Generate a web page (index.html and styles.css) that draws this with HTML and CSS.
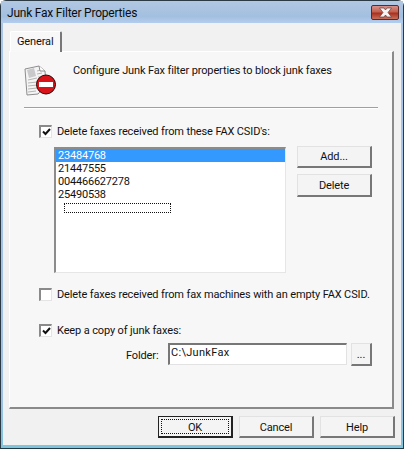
FILE: index.html
```html
<!DOCTYPE html>
<html lang="en">
<head>
<meta charset="utf-8">
<title>Junk Fax Filter Properties</title>
<link rel="stylesheet" href="styles.css">
</head>
<body>
<div class="window">
  <div class="titlebar">
    <span class="title">Junk Fax Filter Properties</span>
    <div class="close">
      <svg width="17" height="11" viewBox="0 0 17 11"><path d="M2.500 1h4.500l1.500 2L10 1h4.500l-3.500 4.500 3.500 4.500H10L8.500 8 7 10H2.500L6 5.500z" fill="#f4f4f4" stroke="#6b3a34" stroke-width=".7"/></svg>
    </div>
  </div>
  <div class="client">
    <div class="tabstrip"><div class="tab">General</div></div>
    <div class="panel">
      <div class="intro">
        <svg class="intro-icon" width="34" height="34" viewBox="0 0 34 34">
          <path d="M1 5l14-3 6 5 1 14-8 9-11 1z" fill="#f4f4f4" stroke="#8d8d8d"/>
          <path d="M3 6l7-2 2 8-7 2z" fill="#c9c9cc"/>
          <path d="M4 16l9-2M4 19l9-1M4 22l9-1M4 25l9-1M4 28l8-1M13 7l4-1M13 10l5-1M14 13l4 0" stroke="#b5b5b5" fill="none"/>
          <path d="M15 2l1 5 5 0" fill="#fff" stroke="#8d8d8d"/>
          <circle cx="22" cy="20.500" r="9.500" fill="#d8141a" stroke="#2a0505"/>
          <rect x="15" y="18" width="14" height="5" fill="#fff"/>
        </svg>
        <span class="intro-text">Configure Junk Fax filter properties to block junk faxes</span>
      </div>
      <div class="rule"></div>
      <label class="check check-first"><span class="box"><svg width="9" height="8" viewBox="0 0 9 8"><path d="M1 3.500l2.500 2.500L8 1" fill="none" stroke="#111" stroke-width="2"/></svg></span>Delete faxes received from these FAX CSID's:</label>
      <div class="list-area">
        <div class="list">
          <div class="row row-selected">23484768</div>
          <div class="row">21447555</div>
          <div class="row">004466627278</div>
          <div class="row">25490538</div>
          <div class="editing"></div>
        </div>
        <div class="list-actions">
          <div class="btn btn-side">Add...</div>
          <div class="btn btn-side">Delete</div>
        </div>
      </div>
      <label class="check check-second"><span class="box"></span>Delete faxes received from fax machines with an empty FAX CSID.</label>
      <label class="check check-third"><span class="box"><svg width="9" height="8" viewBox="0 0 9 8"><path d="M1 3.500l2.500 2.500L8 1" fill="none" stroke="#111" stroke-width="2"/></svg></span>Keep a copy of junk faxes:</label>
      <div class="folder">
        <span class="folder-label">Folder:</span>
        <div class="input">C:\JunkFax</div>
        <div class="btn btn-browse">...</div>
      </div>
    </div>
    <div class="footer">
      <div class="btn btn-foot btn-default"><span class="focus">OK</span></div>
      <div class="btn btn-foot">Cancel</div>
      <div class="btn btn-foot">Help</div>
    </div>
  </div>
</div>
</body>
</html>
```

FILE: styles.css
```css
* { box-sizing: border-box; }
html, body { margin: 0; padding: 0; }
body {
  width: 404px;
  height: 449px;
  overflow: hidden;
  font-family: Roboto, "Liberation Sans", sans-serif;
  font-size: 11px;
  letter-spacing: -0.13px;
  color: #111;
  white-space: nowrap;
}
.window {
  width: 404px;
  height: 449px;
  padding: 0 2px 3px;
  display: flex;
  flex-direction: column;
  background: linear-gradient(#aec6e2, #a9c6ea 60px, #9fc2e4 400px, #7fc4dc);
  border: 1px solid #2c3a46;
  border-radius: 6px 6px 0 0;
  border-bottom-color: #1f3a44;
}
.titlebar {
  height: 22px;
  flex: none;
  display: flex;
  align-items: center;
  justify-content: space-between;
  background: linear-gradient(#b1c8e2, #a3bfe0 70%, #b3cdee);
  margin: 0 -2px;
  padding: 0 4px 0 6px;
}
.title { font-size: 12px; letter-spacing: -0.22px; color: #0c0c0c; padding-top: 1px; }
.close {
  width: 28px;
  height: 15px;
  margin-top: 1px;
  display: flex;
  align-items: center;
  justify-content: center;
  border: 1px solid #5a2a2a;
  border-radius: 2px;
  background: linear-gradient(#d9908a, #c2604f 45%, #a8301e 55%, #c8705c);
}
.client {
  flex: 1;
  display: flex;
  flex-direction: column;
  background: #f1f1f1;
  padding: 8px 6px 0 6px;
}
.tabstrip { height: 20px; flex: none; display: flex; }
.tab {
  width: 52px;
  height: 21px;
  margin-left: 1px;
  padding: 3px 0 0 6px;
  background: #f8f8f8;
  border: 1px solid #fff;
  border-bottom: 0;
  border-right: 2px solid #777;
  border-radius: 2px 2px 0 0;
  position: relative;
  z-index: 1;
}
.panel {
  width: 385px;
  height: 358px;
  flex: none;
  background: #f7f7f7;
  border: 1px solid #fff;
  border-right: 2px solid #8a8a8a;
  border-bottom: 2px solid #8a8a8a;
  padding: 12px 0 0 14px;
}
.intro { display: flex; height: 43px; }
.intro-icon { flex: none; }
.intro-text { margin-left: 15px; }
.rule {
  width: 354px;
  height: 2px;
  background: #a0a0a0;
  border-bottom: 1px solid #fff;
}
.check { display: flex; align-items: center; height: 13px; }
.box {
  width: 13px;
  height: 13px;
  margin-left: 15px;
  margin-right: 5px;
  background: #fff;
  border: 2px solid #8a8a8a;
  border-right: 1px solid #e4e4e4;
  border-bottom: 1px solid #e4e4e4;
  display: flex;
  align-items: center;
  justify-content: center;
  flex: none;
}
.check-first { margin-top: 16px; }
.check-second { margin-top: 15px; }
.check-third { margin-top: 23px; }
.list-area { display: flex; margin: 9px 0 0 30px; }
.list {
  width: 232px;
  height: 126px;
  background: #fff;
  border: 2px solid #8c8c8c;
  border-right: 1px solid #e6e6e6;
  border-bottom: 1px solid #e6e6e6;
}
.row { height: 13px; line-height: 13px; padding-left: 2px; letter-spacing: -0.2px; }
.row-selected { background: #3399ff; color: #fff; }
.editing {
  width: 107px;
  height: 10px;
  margin: 2px 0 0 8px;
  border: 1px dotted #111;
}
.list-actions { display: flex; flex-direction: column; gap: 6px; margin-left: 11px; margin-top: -1px; }
.btn {
  display: flex;
  align-items: center;
  justify-content: center;
  background: #f4f4f4;
  border: 1px solid #e2e2e2;
  border-right: 2px solid #777;
  border-bottom: 2px solid #777;
  flex: none;
}
.btn-side { width: 75px; height: 22px; }
.list-actions .btn-side:last-child { height: 23px; }
.folder { display: flex; margin: 6px 0 0 102px; }
.folder-label { width: 42px; margin-top: 6px; }
.input {
  width: 179px;
  height: 22px;
  background: #fff;
  border: 2px solid #777;
  border-right: 1px solid #e2e2e2;
  border-bottom: 1px solid #e2e2e2;
  padding: 1px 0 0 1px;
  letter-spacing: 0.3px;
}
.btn-browse { width: 21px; height: 23px; margin-left: 4px; }
.footer {
  display: flex;
  gap: 6px;
  padding: 7px 0 0 149px;
}
.btn-foot { width: 75px; height: 22px; padding-top: 1px; }
.btn-default { border: 1px solid #222; border-right: 2px solid #222; border-bottom: 2px solid #222; padding: 2px; }
.focus {
  flex: 1;
  align-self: stretch;
  display: flex;
  align-items: center;
  justify-content: center;
  border: 1px dotted #111;
  padding-top: 1px;
}
```
